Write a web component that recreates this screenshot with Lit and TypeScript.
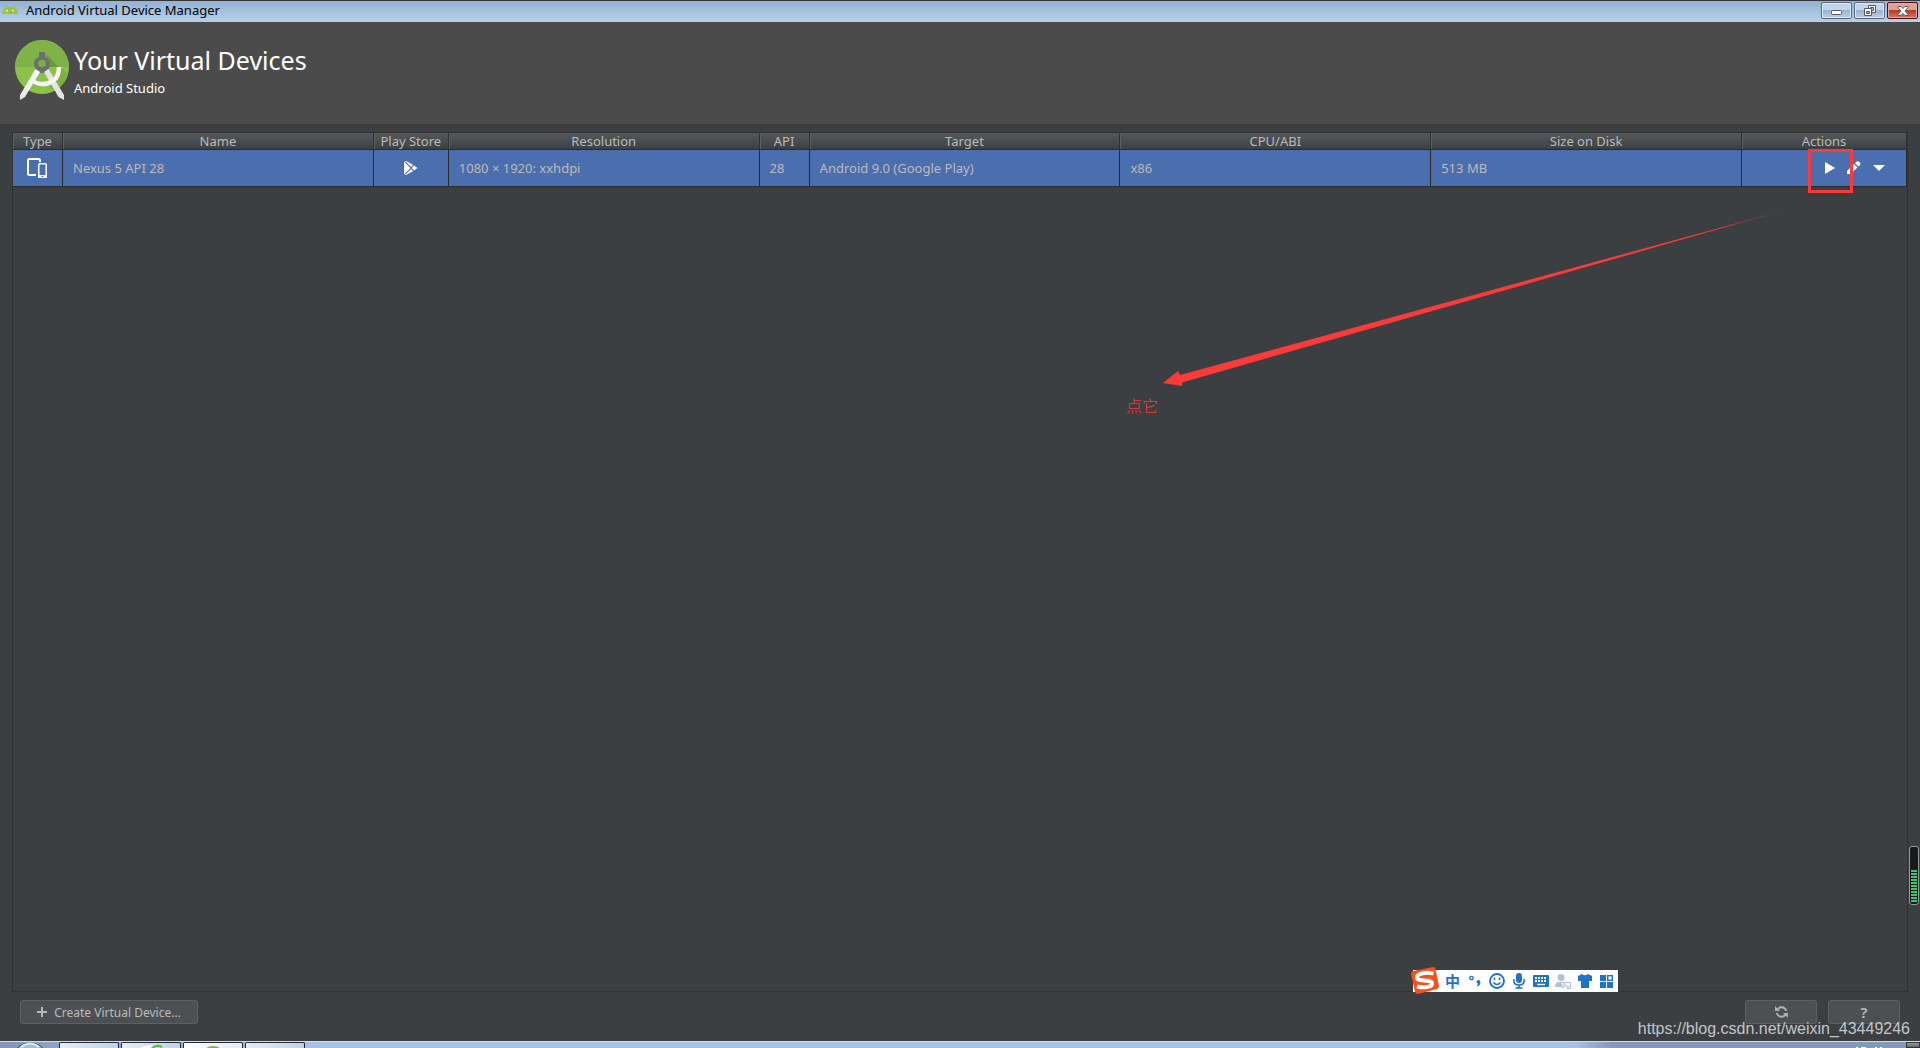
import { LitElement, html, css, svg } from "lit";
import { customElement } from "lit/decorators.js";

interface Column {
  label: string;
  size: string;
}

const columns: Column[] = [
  { label: "Type", size: "narrow" },
  { label: "Name", size: "wide" },
  { label: "Play Store", size: "store" },
  { label: "Resolution", size: "wide" },
  { label: "API", size: "narrow" },
  { label: "Target", size: "wide" },
  { label: "CPU/ABI", size: "wide" },
  { label: "Size on Disk", size: "wide" },
  { label: "Actions", size: "actions" },
];

const androidHead = svg`<svg class="icon" width="16" height="9" viewBox="0 0 16 9" aria-hidden="true">
  <path d="M0 9C0 4.500 3 1.500 8 1.500s8 3 8 7.500z" fill="#9ac43c"/>
  <path d="M3 0l2 3M13 0l-2 3" stroke="#9ac43c" stroke-width="1.200"/>
  <circle cx="5" cy="5.600" r=".9" fill="#fff"/><circle cx="11" cy="5.600" r=".9" fill="#fff"/>
</svg>`;

const studioLogo = svg`<svg class="icon" width="54" height="60" viewBox="0 0 54 60" aria-hidden="true">
  <defs>
    <linearGradient id="arm" x1="0" y1="0" x2="0" y2="1"><stop offset="0" stop-color="#fff"/><stop offset="1" stop-color="#e4e4e4"/></linearGradient>
    <clipPath id="disc"><circle cx="27" cy="27" r="27"/></clipPath>
  </defs>
  <circle cx="27" cy="27" r="27" fill="#8bc34a"/>
  <g clip-path="url(#disc)">
    <rect width="54" height="27" fill="#7fb347"/>
    <path d="M30 13l14 14H34z" fill="#6b9c38"/>
    <path d="M46 27l8 8v14H36l-4-6c8-1 13-7 14-16z" fill="#7bb241"/>
  </g>
  <path d="M24 12h6v5l4 2.500 1 3-1 6-5 4.500h-4l-5-4.500-1-6 1-3 4-2.500z" fill="#6b6f70"/>
  <circle cx="27" cy="23.500" r="3.800" fill="#7cae45"/>
  <path d="M20.500 29l4.500 3L10 57l-5 3v-5z" fill="url(#arm)"/>
  <path d="M33.500 29l-4.500 3L43.500 57l5.500 3v-5z" fill="#e3e3e3"/>
  <path d="M17 40C22 45 31 45.500 38 41c4-2.700 6-7 6-14" fill="none" stroke="#f5f5f5" stroke-width="4.500"/>
</svg>`;

const deviceIcon = svg`<svg class="icon" width="21" height="21" viewBox="0 0 21 21" aria-hidden="true">
  <path d="M9 17H2.500Q1 17 1 15.500v-13Q1 1 2.500 1h9Q13 1 13 2.500V4" fill="none" stroke="#fff" stroke-width="2"/>
  <rect x="11.750" y="5.750" width="7.500" height="13.500" rx="1" fill="none" stroke="#fff" stroke-width="1.500"/>
  <path d="M11 17h9v3h-9z" fill="#fff"/><path d="M14.500 18.500h2" stroke="#4b6eaf" stroke-width="1"/>
</svg>`;

const playStoreIcon = svg`<svg class="icon" width="14" height="14" viewBox="0 0 14 14" aria-hidden="true">
  <path d="M0 .5L6.500 7 0 13.500zM.8 0H2l7 3.800L7.300 6zM.8 14H2l7-3.800L7.300 8zM10 4.600L13.500 7 10 9.400 7.800 7z" fill="#fff"/>
</svg>`;

const runIcon = svg`<svg class="icon" width="10" height="12" viewBox="0 0 10 12" aria-hidden="true"><path d="M0 0l10 6-10 6z" fill="#fff"/></svg>`;

const editIcon = svg`<svg class="icon" width="14" height="14" viewBox="0 0 14 14" aria-hidden="true">
  <path d="M0 13v-3l7-7 3.500 3.500-7 6.500zM8 2.200L9.500.7q1.500-1 3 .3t.5 3l-1.500 1.500z" fill="#fff"/>
</svg>`;

const moreIcon = svg`<svg class="icon" width="12" height="6" viewBox="0 0 12 6" aria-hidden="true"><path d="M0 0h12L6 6z" fill="#fff"/></svg>`;

const plusIcon = svg`<svg class="icon" width="10" height="10" viewBox="0 0 10 10" aria-hidden="true"><path d="M5 0v10M0 5h10" stroke="#b4b8ba" stroke-width="2"/></svg>`;

const refreshIcon = svg`<svg class="icon" width="13" height="12" viewBox="0 0 13 12" aria-hidden="true">
  <path d="M2.500 3.500C4 .5 9.500 0 11.500 5M10.500 8.500C9 11.500 3.500 12 1.500 7" fill="none" stroke="#afb1b3" stroke-width="1.800"/>
  <path d="M0 0v5h5zM13 12V7H8z" fill="#afb1b3"/>
</svg>`;

const minimizeIcon = svg`<svg class="icon" width="11" height="5" viewBox="0 0 11 5" aria-hidden="true"><rect x=".5" y=".5" width="10" height="4" rx="1" fill="#fff" stroke="#535666"/></svg>`;

const restoreIcon = svg`<svg class="icon" width="12" height="12" viewBox="0 0 12 12" aria-hidden="true">
  <g fill="#fff" stroke="#535666"><path d="M4.500.5h7v7h-7z"/><path d="M6.500 2.500h3v3h-3z" fill="#a5bdd6"/>
  <path d="M.5 3.500h7v7h-7z"/><path d="M2.500 6.500h3v2h-3z" fill="#a5bdd6"/></g>
</svg>`;

const closeIcon = svg`<svg class="icon" width="12" height="10" viewBox="0 0 12 10" aria-hidden="true">
  <path d="M1 .5h3l2 2L8 .5h3v1L8 5l3 3.500v1H8l-2-2-2 2H1v-1L4 5 1 1.500z" fill="#fff" stroke="#535666"/>
</svg>`;

const sogouLogo = svg`<svg class="icon" width="30" height="28" viewBox="0 0 30 28" aria-hidden="true">
  <path d="M3 4L23 0q2 0 2.500 2L29 19q0 2-2 3L8 27q-2 0-3-2L1 7q0-2 2-3z" fill="#f4511e"/>
  <path d="M23.500 6.500C17 5 7 6 7 10.500c0 5 15 1 15 6 0 4-9 4.500-15 3" fill="none" stroke="#fff" stroke-width="4"/>
</svg>`;

const punctuationIcon = svg`<svg class="icon" width="12" height="12" viewBox="0 0 12 12" aria-hidden="true">
  <circle cx="2.500" cy="3" r="1.700" fill="none" stroke="#1e73c8" stroke-width="1.300"/>
  <path d="M7.500 6.500q0-1.500 2-1.500t2 2.500q0 2.500-3 4l-.5-1q1-.8 1-2-1.500 0-1.500-2z" fill="#1e73c8"/>
</svg>`;

const smileIcon = svg`<svg class="icon" width="16" height="16" viewBox="0 0 16 16" aria-hidden="true">
  <circle cx="8" cy="8" r="7" fill="none" stroke="#1e73c8" stroke-width="1.800"/>
  <path d="M4.500 9.500q3.500 4 7 0M5.500 4.500v2.500M10.500 4.500v2.500" fill="none" stroke="#1e73c8" stroke-width="1.500"/>
</svg>`;

const micIcon = svg`<svg class="icon" width="12" height="16" viewBox="0 0 12 16" aria-hidden="true">
  <rect x="3" width="6" height="10" rx="3" fill="#1e73c8"/>
  <path d="M.8 6v1.500q0 4.500 5.200 4.500t5.200-4.500V6M6 12v3M2.500 15h7" fill="none" stroke="#1e73c8" stroke-width="1.600"/>
</svg>`;

const keyboardIcon = svg`<svg class="icon" width="16" height="12" viewBox="0 0 16 12" aria-hidden="true">
  <rect width="16" height="12" rx="1" fill="#1e73c8"/>
  <path d="M2 3h12M2 6h12" stroke="#fff" stroke-width="2" stroke-dasharray="2 1"/><path d="M4 9.500h8" stroke="#fff" stroke-width="1.400"/>
</svg>`;

const userIcon = svg`<svg class="icon" width="16" height="15" viewBox="0 0 16 15" aria-hidden="true">
  <circle cx="6" cy="3.500" r="3.500" fill="#b3c0d6"/><path d="M0 13q0-5 4-5h4l1 1v4z" fill="#b3c0d6"/>
  <path d="M6 8.500h3v5H7v-3H6zM10 8.500h5.500v6H12v-1.500h2V12h-4z" fill="#fff" stroke="#b3c0d6"/>
</svg>`;

const shirtIcon = svg`<svg class="icon" width="14" height="14" viewBox="0 0 14 14" aria-hidden="true">
  <path d="M0 2l4-2q3 2.500 6 0l4 2v5h-3v7H3V7H0z" fill="#1e73c8"/>
</svg>`;

const gridIcon = svg`<svg class="icon" width="13" height="13" viewBox="0 0 13 13" aria-hidden="true">
  <path d="M0 0h6v6H0zM0 7h6v6H0zM7 7h6v6H7z" fill="#1e73c8"/><rect x="7.700" y=".7" width="4.600" height="4.600" fill="none" stroke="#1e73c8" stroke-width="1.400"/>
</svg>`;

@customElement("avd-titlebar")
class AvdTitlebar extends LitElement {
  static styles = css`
    :host { display: block; }
    .bar {
      box-sizing: border-box; height: 22px; display: flex; align-items: flex-start; gap: 8px;
      padding: 0 2px; border-top: 1px solid #33373c;
      background: linear-gradient(#94b1d2, #b8d1ea);
    }
    .icon { display: block; flex: none; }
    .brand { padding-top: 4px; }
    .title { flex: 1; margin: 0; font-size: 13px; font-weight: 400; line-height: 18px; color: #000; }
    .controls { display: flex; gap: 2px; padding-top: 1px; }
    .control {
      box-sizing: border-box; width: 31px; height: 17px; padding: 0;
      display: flex; align-items: center; justify-content: center;
      border: 1px solid #5a6b86; border-radius: 2px; box-shadow: inset 0 0 0 1px #dbe8f5;
      background: linear-gradient(#c2d5e8 45%, #98b3cf 50%, #bad0e6);
    }
    .low { padding-top: 4px; }
    .close { border-color: #46131a; box-shadow: inset 0 0 0 1px #e6a79c; background: linear-gradient(#e0a194 45%, #b83c24 50%, #d5755c); }
  `;
  render() {
    return html`<div class="bar">
      <div class="brand">${androidHead}</div>
      <h2 class="title">Android Virtual Device Manager</h2>
      <div class="controls">
        <button class="control low" aria-label="Minimize">${minimizeIcon}</button>
        <button class="control" aria-label="Restore">${restoreIcon}</button>
        <button class="control close" aria-label="Close">${closeIcon}</button>
      </div>
    </div>`;
  }
}

@customElement("avd-table")
class AvdTable extends LitElement {
  static styles = css`
    :host { display: block; }
    .icon { display: block; }
    .table { width: 100%; table-layout: fixed; border-collapse: separate; border-spacing: 0; font-size: 13px; }
    .narrow { width: 50px; }
    .store { width: 75px; }
    .actions { width: 165px; }
    .head {
      box-sizing: border-box; height: 17px; padding: 0; font-weight: 400; line-height: 16px; color: #bbb;
      border-bottom: 1px solid #2b2b2b; border-right: 1px solid #2e3031;
      background: linear-gradient(#56595b, #3d4042);
      box-shadow: inset 1px 0 0 #5b5f61;
    }
    .cell {
      box-sizing: border-box; height: 37px; padding: 0 10px; line-height: 18px; color: #bbb;
      background: #4b6eaf; border-right: 1px solid #2b2b2b; border-bottom: 1px solid #2b2b2b;
    }
    .centered { display: flex; justify-content: center; }
    .tools { display: flex; justify-content: flex-end; align-items: center; gap: 12px; padding-right: 11px; }
    .tool { display: block; padding: 0; border: 0; background: none; }
    .run { position: relative; }
    .mark {
      position: absolute; left: -17px; top: -13px; width: 39px; height: 38px;
      border: 3px solid #fd3a3a;
    }
  `;
  render() {
    return html`<table class="table">
      <colgroup>${columns.map((c) => html`<col class=${c.size} />`)}</colgroup>
      <thead><tr>${columns.map((c) => html`<th class="head" scope="col">${c.label}</th>`)}</tr></thead>
      <tbody><tr>
        <td class="cell"><div class="centered">${deviceIcon}</div></td>
        <td class="cell">Nexus 5 API 28</td>
        <td class="cell"><div class="centered">${playStoreIcon}</div></td>
        <td class="cell">1080 × 1920: xxhdpi</td>
        <td class="cell">28</td>
        <td class="cell">Android 9.0 (Google Play)</td>
        <td class="cell">x86</td>
        <td class="cell">513 MB</td>
        <td class="cell"><div class="tools">
          <button class="tool run" aria-label="Launch">${runIcon}<span class="mark"></span></button>
          <button class="tool" aria-label="Edit">${editIcon}</button>
          <button class="tool" aria-label="More actions">${moreIcon}</button>
        </div></td>
      </tr></tbody>
    </table>`;
  }
}

@customElement("ime-bar")
class ImeBar extends LitElement {
  static styles = css`
    :host { display: block; }
    .bar { display: flex; align-items: center; height: 22px; background: #fff; padding-right: 4px; }
    .icon { display: block; flex: none; }
    .logo { margin-left: -3px; }
    .tools { display: flex; align-items: center; gap: 7px; padding-left: 5px; }
    .tool { display: flex; align-items: center; justify-content: center; width: 15px; height: 20px; padding: 0; border: 0; background: none; font: 700 15px/20px "Noto Sans CJK SC", sans-serif; color: #1e73c8; }
    .tool .icon { margin: 0 -2px; }
  `;
  render() {
    const tools: [string, unknown][] = [
      ["Language", "中"], ["Punctuation", punctuationIcon], ["Emoji", smileIcon], ["Voice", micIcon],
      ["Keyboard", keyboardIcon], ["Account", userIcon], ["Skin", shirtIcon], ["Toolbox", gridIcon],
    ];
    return html`<div class="bar"><div class="logo">${sogouLogo}</div><div class="tools">
      ${tools.map(([label, icon]) => html`<button class="tool" aria-label=${label}>${icon}</button>`)}
    </div></div>`;
  }
}

@customElement("task-bar")
class TaskBar extends LitElement {
  static styles = css`
    :host { display: block; }
    .bar {
      height: 7px; display: flex; overflow: hidden; box-sizing: border-box; border-top: 1px solid #d3deea;
      background: linear-gradient(90deg, #8296b1 0, #8fa5c1 58px, #a9c2e0 320px, #a9c2e0 82%, #8499b4 84%);
    }
    .icon { display: block; }
    .start { width: 59px; display: flex; justify-content: center; }
    .tasks { flex: 1; display: flex; gap: 2px; }
    .task { width: 60px; height: 6px; padding: 0; display: flex; justify-content: center; border: 1px solid #222a35; border-bottom: 0; border-radius: 2px 2px 0 0; background: linear-gradient(110deg, #e6edf5, #bfd2e8); box-sizing: border-box; }
    .active { background: linear-gradient(110deg, #fff, #e2eaf3); }
    .clock { padding-right: 24px; }
    .corner { width: 14px; height: 6px; box-sizing: border-box; padding: 0; border: 1px solid #333; background: linear-gradient(#929aa3, #5f6972); }
  `;
  render() {
    return html`<div class="bar">
      <div class="start"><svg class="icon" width="30" height="6" aria-hidden="true"><ellipse cx="15" cy="10" rx="14" ry="9" fill="#9dc0d6" stroke="#1d4567"/><path d="M6 5q9-7 18 0" fill="none" stroke="#dcecf5" stroke-width="2"/></svg></div>
      <div class="tasks">
        <button class="task" aria-label="Explorer"><svg class="icon" width="20" height="6" aria-hidden="true"><path d="M2 6h15" stroke="#d1b874" stroke-width="2"/></svg></button>
        <button class="task" aria-label="Browser"><svg class="icon" width="26" height="6" aria-hidden="true"><path d="M2 5q8-4 14-2l-4 3z" fill="#fff"/><path d="M13 6q5-5 11-2" fill="none" stroke="#5cba3a" stroke-width="2"/></svg></button>
        <button class="task active" aria-label="Android Studio"><svg class="icon" width="20" height="6" aria-hidden="true"><ellipse cx="10" cy="10" rx="10" ry="7" fill="#80b440"/></svg></button>
        <button class="task" aria-label="Window"></button>
      </div>
      <svg class="icon clock" width="26" height="6" aria-hidden="true"><path d="M0 5.500h2M5 5.500h5M19 5.500h2M24 5.500h2" stroke="#fff"/></svg>
      <button class="corner" aria-label="Show desktop"></button>
    </div>`;
  }
}

@customElement("app-root")
class AppRoot extends LitElement {
  static styles = css`
    :host {
      position: relative; display: flex; flex-direction: column; height: 100vh; overflow: hidden;
      background: #3c3f41; font-family: "Noto Sans", "Noto Sans CJK SC", sans-serif; color: #bbb;
    }
    .icon { display: block; flex: none; }
    .header { box-sizing: border-box; height: 102px; display: flex; align-items: flex-start; gap: 5px; padding: 18px 15px; background: #4b4b4b; color: #fff; }
    .heading { margin: 0; font-size: 25px; font-weight: 400; line-height: 32px; padding-top: 4px; }
    .sub { margin: 0; font-size: 13px; line-height: 24px; }
    .panel { flex: 1; margin: 8px 12px 0; border: 1px solid #323232; }
    .footer { display: flex; align-items: center; gap: 11px; padding: 8px 20px 17px; }
    .button {
      box-sizing: border-box; height: 24px; display: flex; align-items: center; justify-content: center; gap: 7px;
      border: 1px solid #5e6060; border-radius: 3px; background: #4c5052; color: #bbb; font: inherit; font-size: 12px; padding: 0;
    }
    .create { width: 178px; margin-right: auto; }
    .small { width: 72px; }
    .help { font-size: 15px; font-weight: 600; }
    .arrow { position: absolute; left: 1163px; top: 208px; pointer-events: none; }
    .note { position: absolute; left: 1126px; top: 393px; margin: 0; font: 300 16px/24px "Noto Sans CJK SC", sans-serif; color: #fd3a3a; }
    .ime { position: absolute; left: 1413px; top: 970px; }
    .meter {
      position: absolute; right: 1px; top: 846px; width: 10px; height: 59px; box-sizing: border-box;
      display: flex; align-items: flex-end; padding: 1px; border: 1px solid #999; border-radius: 3px; background: #17191b;
    }
    .level { width: 100%; height: 33px; background: repeating-linear-gradient(#3fc36b 0 2px, #17191b 2px 3px); }
    .watermark { position: absolute; right: 10px; bottom: 8px; font: 16px/22px "Liberation Sans", sans-serif; color: #c4c5c6; text-decoration: none; }
  `;
  render() {
    return html`
      <avd-titlebar></avd-titlebar>
      <header class="header">
        ${studioLogo}
        <div>
          <h1 class="heading">Your Virtual Devices</h1>
          <p class="sub">Android Studio</p>
        </div>
      </header>
      <main class="panel"><avd-table></avd-table></main>
      <footer class="footer">
        <button class="button create">${plusIcon}Create Virtual Device...</button>
        <button class="button small" aria-label="Refresh">${refreshIcon}</button>
        <button class="button small help">?</button>
      </footer>
      <task-bar></task-bar>
      <svg class="arrow" width="628" height="180" viewBox="0 0 628 180" aria-hidden="true">
        <defs><linearGradient id="fade"><stop offset="0" stop-color="#fd3a3a"/><stop offset=".9" stop-color="#fd3a3a"/><stop offset="1" stop-color="#fd3a3a" stop-opacity=".3"/></linearGradient></defs>
        <path d="M0 175L15 163l2 4L626 1 19 174.500v3.500z" fill="url(#fade)"/>
      </svg>
      <p class="note">点它</p>
      <ime-bar class="ime"></ime-bar>
      <div class="meter"><div class="level"></div></div>
      <a class="watermark" href="https://blog.csdn.net/weixin_43449246">https://blog.csdn.net/weixin_43449246</a>
    `;
  }
}
